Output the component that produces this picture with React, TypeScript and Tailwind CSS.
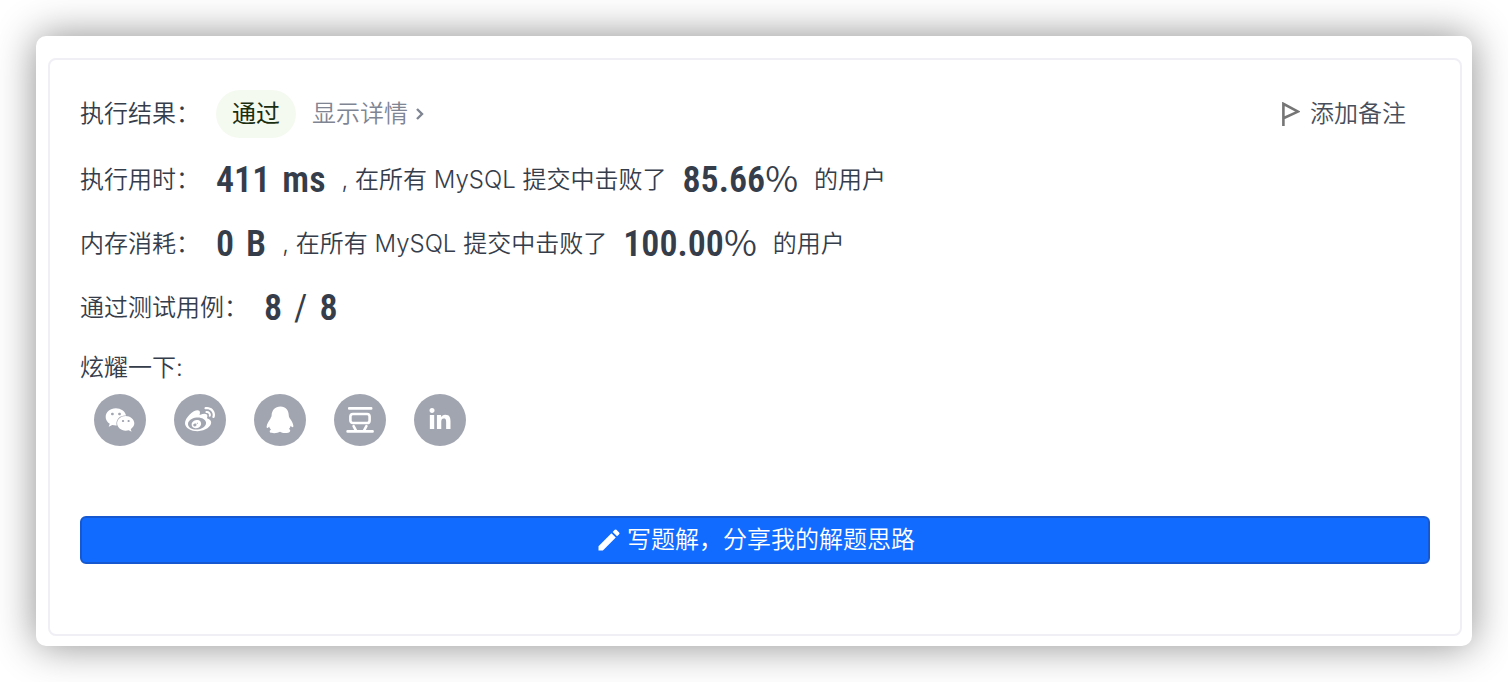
import type { ReactNode } from "react";
import { FaLinkedinIn, FaWeibo, FaWeixin } from "react-icons/fa";
import { MdEdit } from "react-icons/md";

function PenguinIcon() {
  return (
    <svg viewBox="0 0 28 28" className="size-7" fill="currentColor">
      <path d="M14.5 0.6C9 .6 5.8 4.4 5.6 9.6c0 1.4-.8 1.8-1.2 3.2C2.6 15.4.8 18 .6 21c.1 1.6 1.2 1.4 2.6-.4.3 1.4 1 2.4 1.8 3.2-1.3.7-1.6 1.4-1 2.4C5 27.4 11.5 27.6 14 25.8c2.5 1.8 9 1.6 10-.4.5-.9.2-1.8-1-2.4.8-.9 1.4-1.9 1.7-3.2 1.5 1.9 2.6 1.8 2.7.2-.2-3-1.9-5.4-3.7-7.8-.4-1.2-.9-1.6-.9-2.8C22.6 4.2 19.8.6 14.5.6Z" />
    </svg>
  );
}

function DoubanIcon() {
  return (
    <svg viewBox="0 0 28 28" className="size-7" fill="none" stroke="currentColor" strokeWidth="2.6" strokeLinecap="round">
      <path d="M3.2 2.4h22M1.6 25.4h25M7.6 20.2l2.4 4.4M20.4 20.2l-2.4 4.4" />
      <rect x="4.4" y="8" width="19.2" height="9" rx="2.6" />
    </svg>
  );
}

function FlagIcon() {
  return (
    <svg viewBox="0 0 20 24" className="w-5 h-6" fill="none" stroke="#757575" strokeWidth="2.6">
      <path d="M3.4 24V1.8L18 9.6 3.4 16.2" />
    </svg>
  );
}

function ChevronIcon() {
  return (
    <svg viewBox="0 0 8 12" className="w-2 h-3" fill="none" stroke="currentColor" strokeWidth="2.4">
      <path d="M1 1l5 5-5 5" />
    </svg>
  );
}

const shares = [
  { name: "微信", icon: <FaWeixin className="size-[30px]" /> },
  { name: "微博", icon: <FaWeibo className="size-[30px]" /> },
  { name: "QQ", icon: <PenguinIcon /> },
  { name: "豆瓣", icon: <DoubanIcon /> },
  { name: "LinkedIn", icon: <FaLinkedinIn className="size-6" /> },
];

function Row({ label, children }: { label: string; children: ReactNode }) {
  return (
    <div className="flex items-center h-16 gap-4">
      <span>{label}</span>
      {children}
    </div>
  );
}

function Big({ children }: { children: ReactNode }) {
  return (
    <span className="flex gap-3 font-['Roboto_Condensed',Roboto,sans-serif] text-4xl leading-10 font-semibold">
      {children}
    </span>
  );
}

function Beat({ percent }: { percent: string }) {
  return (
    <>
      <span>, 在所有 MySQL 提交中击败了</span>
      <span className="flex items-baseline">
        <Big>{percent}</Big>
        <span className="font-['Noto_Sans_CJK_SC',sans-serif] text-4xl leading-8">%</span>
      </span>
      <span>的用户</span>
    </>
  );
}

export default function App() {
  return (
    <div className="bg-white p-9 font-[Inter,'Noto_Sans_CJK_SC',sans-serif] font-[350] text-2xl text-[#363d4a]">
      <div className="rounded-[10px] bg-white pt-[22px] pr-[10px] pb-[10px] pl-3 shadow-[0_0_40px_rgba(0,0,0,0.45)]">
        <div className="rounded-lg border-2 border-[#efeff5] px-[30px] pt-[30px] pb-[70px]">
          <div className="flex items-center justify-between h-12 mb-[10px] pr-6">
            <div className="flex items-center gap-4">
              <span>执行结果：</span>
              <span className="rounded-full bg-[#f4faf0] px-4 leading-[48px] font-normal text-[#1a2e0f]">通过</span>
              <a href="#" className="flex items-center gap-2 text-[#7f8592]">
                显示详情
                <ChevronIcon />
              </a>
            </div>
            <button className="flex items-center gap-[10px] text-[#494e5b]">
              <FlagIcon />
              添加备注
            </button>
          </div>

          <Row label="执行用时：">
            <Big>
              <span>411</span>
              <span>ms</span>
            </Big>
            <Beat percent="85.66" />
          </Row>
          <Row label="内存消耗：">
            <Big>
              <span>0</span>
              <span>B</span>
            </Big>
            <Beat percent="100.00" />
          </Row>
          <Row label="通过测试用例：">
            <Big>
              <span>8</span>
              <span className="font-normal">/</span>
              <span>8</span>
            </Big>
          </Row>

          <div className="mt-3 leading-8">炫耀一下:</div>
          <div className="mt-[10px] ml-[14px] flex gap-7">
            {shares.map((s) => (
              <a key={s.name} href="#" aria-label={s.name} className="flex size-[52px] items-center justify-center rounded-full bg-[#a1a5b0] text-white">
                {s.icon}
              </a>
            ))}
          </div>

          <button className="mt-[70px] flex h-12 w-full items-center justify-center gap-1 rounded-md border-2 border-[#1658cf] bg-[#126bff] text-white">
            <MdEdit className="size-7" />
            写题解，分享我的解题思路
          </button>
        </div>
      </div>
    </div>
  );
}
